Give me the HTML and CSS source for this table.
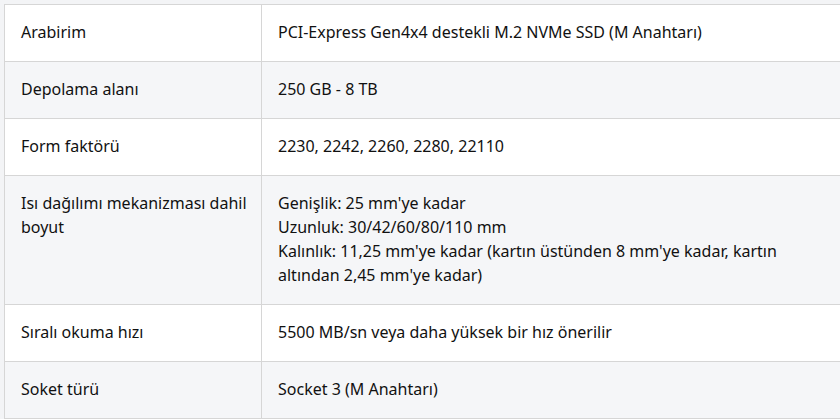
FILE: index.html
```html
<!DOCTYPE html>
<html lang="tr">
<head>
<meta charset="utf-8">
<link rel="stylesheet" href="styles.css">
</head>
<body>
<div class="wrap">
<table class="spec">
<colgroup><col class="ck"><col class="cv"></colgroup>
<tr><td class="k">Arabirim</td><td>PCI-Express Gen4x4 destekli M.2 NVMe SSD (M Anahtarı)</td></tr>
<tr class="alt"><td class="k">Depolama alanı</td><td>250 GB - 8 TB</td></tr>
<tr><td class="k">Form faktörü</td><td>2230, 2242, 2260, 2280, 22110</td></tr>
<tr class="alt"><td class="k">Isı dağılımı mekanizması dahil boyut</td><td>Genişlik: 25 mm'ye kadar<br>Uzunluk: 30/42/60/80/110 mm<br>Kalınlık: 11,25 mm'ye kadar (kartın üstünden 8 mm'ye kadar, kartın altından 2,45 mm'ye kadar)</td></tr>
<tr><td class="k">Sıralı okuma hızı</td><td>5500 MB/sn veya daha yüksek bir hız önerilir</td></tr>
<tr class="alt"><td class="k">Soket türü</td><td>Socket 3 (M Anahtarı)</td></tr>
</table>
</div>
</body>
</html>
```
FILE: styles.css
```css
html, body { margin: 0; padding: 0; }
body {
  background: #f3f4f6;
  font-family: "Noto Sans", "Open Sans", sans-serif;
  font-size: 16px;
  color: #111111;
  overflow: hidden;
}
.wrap {
  padding: 4px 0 0 4px;
  overflow: hidden;
  width: 836px;
}
.spec {
  border-collapse: collapse;
  width: 840px;
  table-layout: fixed;
}
.spec .ck { width: 257px; }
.spec .cv { width: 583px; }
.spec td {
  border: 1px solid #d6d6d6;
  padding: 15px 16px 17px 16px;
  line-height: 24px;
  vertical-align: top;
  background: #ffffff;
}
.spec td.k { padding-right: 4px; }
.spec .alt td { background: #f5f6f8; }
```
